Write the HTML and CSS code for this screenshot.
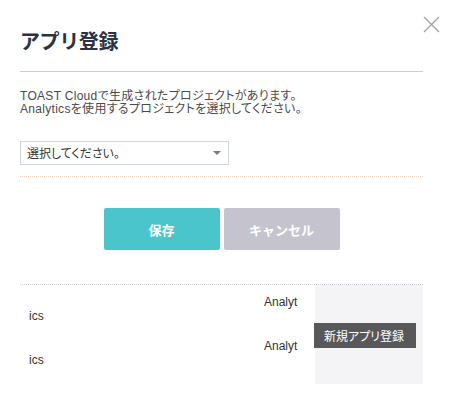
FILE: index.html
```html
<!DOCTYPE html>
<html lang="ja">
<head>
<meta charset="utf-8">
<title>アプリ登録</title>
<link rel="stylesheet" href="styles.css">
</head>
<body>
<div class="dialog">
  <div class="dialog-header">
    <h1 class="dialog-title">アプリ登録</h1>
    <button class="close-btn" aria-label="閉じる">
      <svg width="17" height="17" viewBox="0 0 17 17"><path d="M1 1 L16 16 M16 1 L1 16" stroke="#a0a0a4" stroke-width="1.3" fill="none"/></svg>
    </button>
  </div>
  <div class="form-section">
    <p class="desc">TOAST Cloudで生成されたプロジェクトがあります。<br>Analyticsを使用するプロジェクトを選択してください。</p>
    <div class="select-box">
      <span class="select-text">選択してください。</span>
      <span class="select-arrow"></span>
    </div>
  </div>
  <div class="actions">
    <button class="btn btn-save">保存</button>
    <button class="btn btn-cancel">キャンセル</button>
  </div>
  <div class="app-area">
    <ul class="app-list">
      <li class="app-item"><span class="app-name">Analytics</span></li>
      <li class="app-item"><span class="app-name">Analytics</span></li>
    </ul>
    <div class="app-panel"></div>
    <div class="tooltip">新規アプリ登録</div>
  </div>
</div>
</body>
</html>
```
FILE: styles.css
```css
* { box-sizing: border-box; }
html, body { margin: 0; padding: 0; background: #ffffff; }
body {
  font-family: "Liberation Sans", "Noto Sans CJK JP", sans-serif;
  color: #444;
}
.dialog {
  position: relative;
  width: 453px;
  padding: 0 30px 0 20px;
}
.dialog-header {
  padding: 31px 0 20px;
  border-bottom: 1px solid #c9ced4;
}
.dialog-title {
  margin: 0;
  font-family: "Noto Sans CJK JP", sans-serif;
  font-size: 20px;
  line-height: 20px;
  font-weight: 700;
  color: #2c3241;
  letter-spacing: -0.4px;
}
.close-btn {
  position: absolute;
  top: 16px;
  left: 423px;
  width: 17px;
  height: 17px;
  padding: 0;
  border: 0;
  background: transparent;
  display: block;
}
.close-btn svg { display: block; }
.form-section {
  padding: 18px 0 11px;
  border-bottom: 1px dotted #ecd2bd;
}
.desc {
  margin: 0;
  font-size: 12px;
  line-height: 13px;
  color: #4a4a4a;
  letter-spacing: 0.3px;
  font-feature-settings: "palt";
}
.select-box {
  margin-top: 25px;
  width: 209px;
  height: 24px;
  border: 1px solid #cfd6de;
  display: flex;
  align-items: center;
  justify-content: space-between;
  padding: 0 7px 0 6px;
}
.select-text {
  font-family: "Noto Sans CJK JP", sans-serif;
  font-size: 12px;
  line-height: 14px;
  color: #333;
  font-feature-settings: "palt";
}
.select-arrow {
  width: 0;
  height: 0;
  border-left: 4px solid transparent;
  border-right: 4px solid transparent;
  border-top: 4px solid #7a7a80;
}
.actions {
  display: flex;
  justify-content: center;
  gap: 4px;
  padding: 31px 0 34px;
}
.btn {
  width: 116px;
  height: 42px;
  border: 0;
  border-radius: 2px;
  color: #ffffff;
  font-family: "Noto Sans CJK JP", sans-serif;
  font-size: 13px;
  font-weight: 700;
  padding: 0;
}
.btn-save { background: #4ac5cb; }
.btn-cancel { background: #c5c4ce; }
.app-area {
  position: relative;
  display: flex;
  border-top: 1px dotted #cfd0d6;
}
.app-list {
  list-style: none;
  margin: 0;
  padding: 0 0 0 9px;
  width: 295px;
}
.app-item {
  width: 270px;
  padding: 10px 0 6px;
  font-size: 12px;
  line-height: 14px;
  color: #333;
  text-indent: 235px;
  word-break: break-all;
}
.app-panel {
  width: 108px;
  height: 99px;
  background: #f4f4f7;
}
.tooltip {
  position: absolute;
  left: 294px;
  top: 38px;
  width: 102px;
  height: 25px;
  background: #58585a;
  color: #ffffff;
  font-family: "Noto Sans CJK JP", sans-serif;
  font-size: 12px;
  line-height: 25px;
  padding-left: 10px;
  font-feature-settings: "palt";
}
```
